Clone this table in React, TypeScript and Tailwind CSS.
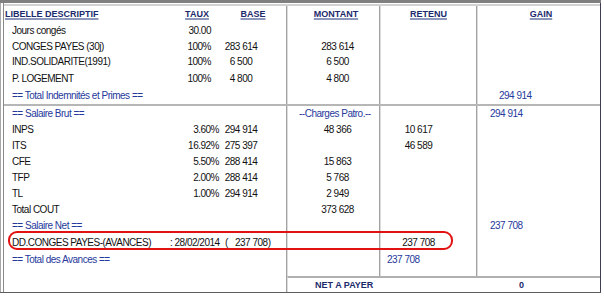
import React from 'react'

type Line = {
  h: string
  left: React.ReactNode
  montant?: React.ReactNode
  retenu?: React.ReactNode
  gain?: React.ReactNode
}

const Head = ({ children }: { children: React.ReactNode }) => (
  <span className="font-bold text-[9px] leading-[15px] text-[#1c2a6c] underline decoration-[#8d97bb] decoration-2 underline-offset-1">
    {children}
  </span>
)

const Blue = ({ children }: { children: React.ReactNode }) => (
  <span className="text-[#26399c]">{children}</span>
)

// left panel: label / taux / base
function Item({ label, taux, base, tight }: { label: string; taux?: string; base?: string; tight?: boolean }) {
  return (
    <div className="flex whitespace-nowrap">
      <div className="w-[156px] pl-[8px]">{label}</div>
      <div className={tight ? 'w-[59px] text-right' : 'w-[59px] text-right pr-[8px]'}>{taux}</div>
      <div className="w-[44px] text-center">{base}</div>
    </div>
  )
}

function Row({ h, left, montant, retenu, gain }: Line) {
  return (
    <div className={`flex ${h}`}>
      <div className="w-[283px] border-r border-[#a2a2a2] flex items-center">
        <div className="w-full">{left}</div>
      </div>
      <div className="w-[93px] border-l border-r border-l-[#dcdcdc] border-r-[#a2a2a2] flex items-center">
        <div className="w-full">{montant}</div>
      </div>
      <div className="w-[97px] border-l border-r border-l-[#dcdcdc] border-r-[#a2a2a2] flex items-center">
        <div className="w-full">{retenu}</div>
      </div>
      <div className="w-[123px] border-l border-[#dcdcdc] flex items-center">
        <div className="w-full">{gain}</div>
      </div>
    </div>
  )
}

const M = ({ v }: { v: string }) => <div className="pl-[8px] text-center">{v}</div>
const R = ({ v }: { v: string }) => <div className="pr-[20px] text-center">{v}</div>

export default function App() {
  const top: Line[] = [
    { h: 'h-[16px]', left: <Item label="Jours congés" taux="30.00" /> },
    { h: 'h-[15px]', left: <Item label="CONGES PAYES (30j)" taux="100%" base="283 614" />, montant: <M v="283 614" /> },
    { h: 'h-[16px]', left: <Item label="IND.SOLIDARITE(1991)" taux="100%" base="6 500" />, montant: <M v="6 500" /> },
    { h: 'h-[17px]', left: <Item label="P. LOGEMENT" taux="100%" base="4 800" />, montant: <M v="4 800" /> },
    {
      h: 'h-[17px]',
      left: <div className="pl-[8px]"><Blue>== Total Indemnités et Primes ==</Blue></div>,
      gain: <div className="pl-[21px]"><Blue>294 914</Blue></div>,
    },
  ]

  const bottom: Line[] = [
    {
      h: 'h-[16px]',
      left: <div className="pl-[8px]"><Blue>== Salaire Brut ==</Blue></div>,
      montant: <div className="pl-[11px]"><Blue>--Charges Patro.--</Blue></div>,
      gain: <div className="pl-[12px]"><Blue>294 914</Blue></div>,
    },
    { h: 'h-[16px]', left: <Item tight label="INPS" taux="3.60%" base="294 914" />, montant: <M v="48 366" />, retenu: <R v="10 617" /> },
    { h: 'h-[16px]', left: <Item tight label="ITS" taux="16.92%" base="275 397" />, retenu: <R v="46 589" /> },
    { h: 'h-[16px]', left: <Item tight label="CFE" taux="5.50%" base="288 414" />, montant: <M v="15 863" /> },
    { h: 'h-[16px]', left: <Item tight label="TFP" taux="2.00%" base="288 414" />, montant: <M v="5 768" /> },
    { h: 'h-[16px]', left: <Item tight label="TL" taux="1.00%" base="294 914" />, montant: <M v="2 949" /> },
    { h: 'h-[16px]', left: <Item label="Total COUT" />, montant: <M v="373 628" /> },
    {
      h: 'h-[16px]',
      left: <div className="pl-[8px]"><Blue>== Salaire Net ==</Blue></div>,
      gain: <div className="pl-[12px]"><Blue>237 708</Blue></div>,
    },
    {
      h: 'h-[17px]',
      left: (
        <div className="flex pl-[8px] whitespace-nowrap">
          <span className="w-[158px]">DD.CONGES PAYES-(AVANCES)</span>
          <span className="w-[55px]">: 28/02/2014</span>
          <span className="w-[10px]">(</span>
          <span>237 708)</span>
        </div>
      ),
      retenu: <R v="237 708" />,
    },
    {
      h: 'h-[17px]',
      left: <div className="pl-[8px]"><Blue>== Total des Avances ==</Blue></div>,
      retenu: <div className="pl-[6px]"><Blue>237 708</Blue></div>,
    },
    { h: 'h-[8px]', left: null },
  ]

  return (
    <div className="relative w-[604px] h-[296px] bg-white overflow-hidden font-['Liberation_Sans',Arial,sans-serif] text-[10px] leading-[16px] tracking-[-0.5px] text-[#111]">
      {/* window chrome top */}
      <div className="h-[3px] w-[601px] bg-[#808080]" />

      <div className="flex h-[289px]">
        {/* left frame */}
        <div className="w-[4px] flex">
          <div className="w-[1px] bg-[#a8a8a8]" />
          <div className="w-[2px]" />
          <div className="w-[1px] bg-[#8a8a8a]" />
        </div>

        <div className="w-[596px] flex flex-col">
          <div className="h-[1px]" />
          <div className="h-[2px] bg-[#d2d2d2]" />

          {/* header */}
          <div className="flex h-[17px] tracking-normal whitespace-nowrap">
            <div className="w-[283px] border-r border-[#a2a2a2] flex">
              <div className="w-[173px] pl-[1px]"><Head>LIBELLE DESCRIPTIF</Head></div>
              <div className="w-[40px] text-center"><Head>TAUX</Head></div>
              <div className="w-[16px]" />
              <div className="w-[40px] text-center"><Head>BASE</Head></div>
            </div>
            <div className="w-[93px] border-l border-r border-l-[#dcdcdc] border-r-[#a2a2a2] pl-[5px] text-center">
              <Head>MONTANT</Head>
            </div>
            <div className="w-[97px] border-l border-r border-l-[#dcdcdc] border-r-[#a2a2a2] text-center">
              <Head>RETENU</Head>
            </div>
            <div className="w-[123px] border-l border-[#dcdcdc] pl-[4px] text-center">
              <Head>GAIN</Head>
            </div>
          </div>

          {top.map((r, i) => (
            <Row key={'t' + i} {...r} />
          ))}

          <div className="h-[2px] bg-[#b6b6b6]" />

          {bottom.map((r, i) => (
            <Row key={'b' + i} {...r} />
          ))}

          {/* net a payer */}
          <div className="flex h-[16px]">
            <div className="w-[283px] border-r border-[#a2a2a2]" />
            <div className="w-[313px] border-l border-t-2 border-l-[#dcdcdc] border-t-[#b0b0b0] flex items-center font-bold text-[9px] leading-[14px] tracking-normal text-[#1c2a6c]">
              <span className="w-[231px] pl-[27px]">NET A PAYER</span>
              <span>0</span>
            </div>
          </div>
        </div>

        {/* right frame */}
        <div className="w-[1px] bg-[#3e3e52]" />
        <div className="w-[3px]" />
      </div>

      <div className="h-[1px] w-[601px] bg-[#5e5e5e]" />

      {/* hand-drawn highlight */}
      <div className="absolute left-[8px] top-[231px] w-[445px] h-[19px] border-2 border-[#e31212] rounded-[9px]" />
    </div>
  )
}
